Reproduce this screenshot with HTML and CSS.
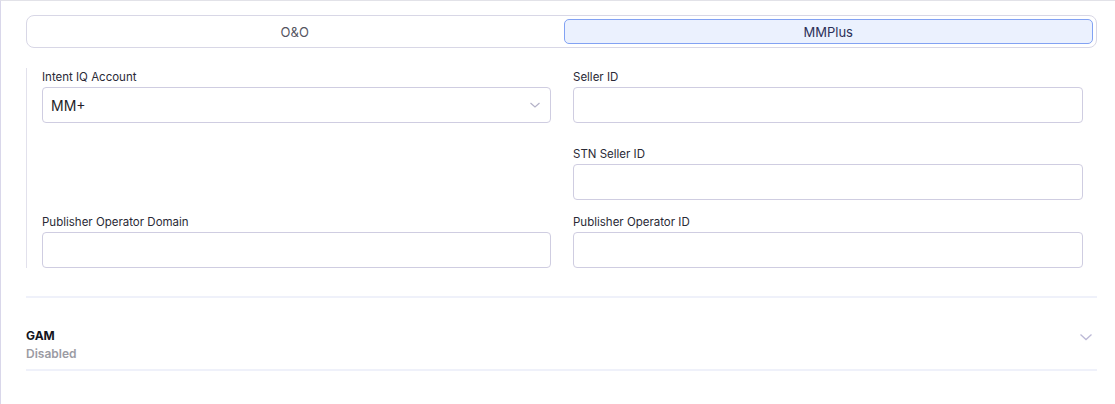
FILE: index.html
```html
<!DOCTYPE html>
<html lang="en">
<head>
<meta charset="UTF-8">
<meta name="viewport" content="width=device-width, initial-scale=1.0">
<title>Identity Settings</title>
<link rel="stylesheet" href="styles.css">
</head>
<body>
<div class="panel">
  <div class="segmented">
    <button class="seg-btn">O&amp;O</button>
    <button class="seg-btn active">MMPlus</button>
  </div>

  <div class="form">
    <div class="field first">
      <label>Intent IQ Account</label>
      <div class="select">
        <span>MM+</span>
        <svg width="12" height="8" viewBox="0 0 12 8"><path d="M1.5 2 L6 6 L10.5 2" fill="none" stroke="#b4b2c8" stroke-width="1.2"/></svg>
      </div>
    </div>
    <div class="field first">
      <label>Seller ID</label>
      <input type="text" class="input">
    </div>

    <div class="field"></div>
    <div class="field">
      <label>STN Seller ID</label>
      <input type="text" class="input">
    </div>

    <div class="field">
      <label>Publisher Operator Domain</label>
      <input type="text" class="input">
    </div>
    <div class="field">
      <label>Publisher Operator ID</label>
      <input type="text" class="input">
    </div>
  </div>

  <div class="accordion">
    <div class="acc-text">
      <div class="acc-title">GAM</div>
      <div class="acc-status">Disabled</div>
    </div>
    <svg class="acc-chevron" width="14" height="8" viewBox="0 0 14 8"><path d="M1.5 1.5 L7 6.5 L12.5 1.5" fill="none" stroke="#bcb9d6" stroke-width="1.3"/></svg>
  </div>
</div>
</body>
</html>
```

FILE: styles.css
```css
html, body {
  margin: 0;
  height: 100%;
}

body {
  font-family: Inter, "Noto Sans", sans-serif;
  color: #23232f;
  background: #fff;
}

.panel {
  height: 100%;
  box-sizing: border-box;
  border-top: 1px solid #e2e2e8;
  border-left: 1px solid #d9d7ea;
  padding: 14px 18px 0 25px;
}

/* O&O / MMPlus switch */
.segmented {
  display: grid;
  grid-template-columns: 1fr 1fr;
  gap: 4px;
  height: 33px;
  box-sizing: border-box;
  padding: 3px;
  border: 1px solid #d8d7e6;
  border-radius: 8px;
}

.seg-btn {
  font-family: inherit;
  font-size: 13px;
  color: #55555f;
  background: none;
  border: 1px solid transparent;
  border-radius: 5px;
  padding: 0;
}

.seg-btn.active {
  background: #ebf1fe;
  border-color: #82a2f3;
  color: #2c2f57;
}

.form {
  margin-top: 20px;
  border-left: 1px solid #e2e1ec;
  padding: 0 14px 0 15px;
  display: grid;
  grid-template-columns: 509fr 510fr;
  column-gap: 22px;
  row-gap: 13px;
}

.field.first {
  padding-bottom: 9px;
}

.field label {
  display: block;
  font-size: 11.5px;
  line-height: 16px;
  padding-top: 1px;
  margin-bottom: 2px;
  color: #2a2a36;
}

.input,
.select {
  display: block;
  width: 100%;
  height: 36px;
  box-sizing: border-box;
  border: 1px solid #cfcde1;
  border-radius: 4px;
  background: #fff;
  font-family: inherit;
  font-size: 14px;
  margin: 0;
}

.select {
  display: flex;
  align-items: center;
  justify-content: space-between;
  padding: 0 9px 0 8px;
  color: #1f1f28;
}

.accordion {
  margin-top: 28px;
  border-top: 2px solid #eff1fa;
  border-bottom: 2px solid #eff1fa;
  padding: 30px 4px 7px 0;
  display: flex;
  justify-content: space-between;
  align-items: flex-start;
}

.acc-title {
  font-size: 12px;
  font-weight: 700;
  line-height: 16px;
  color: #15151d;
}

.acc-status {
  margin-top: 2px;
  font-size: 12px;
  font-weight: 600;
  line-height: 16px;
  color: #9b9ba3;
}

.acc-chevron {
  margin-top: 5px;
}
```
